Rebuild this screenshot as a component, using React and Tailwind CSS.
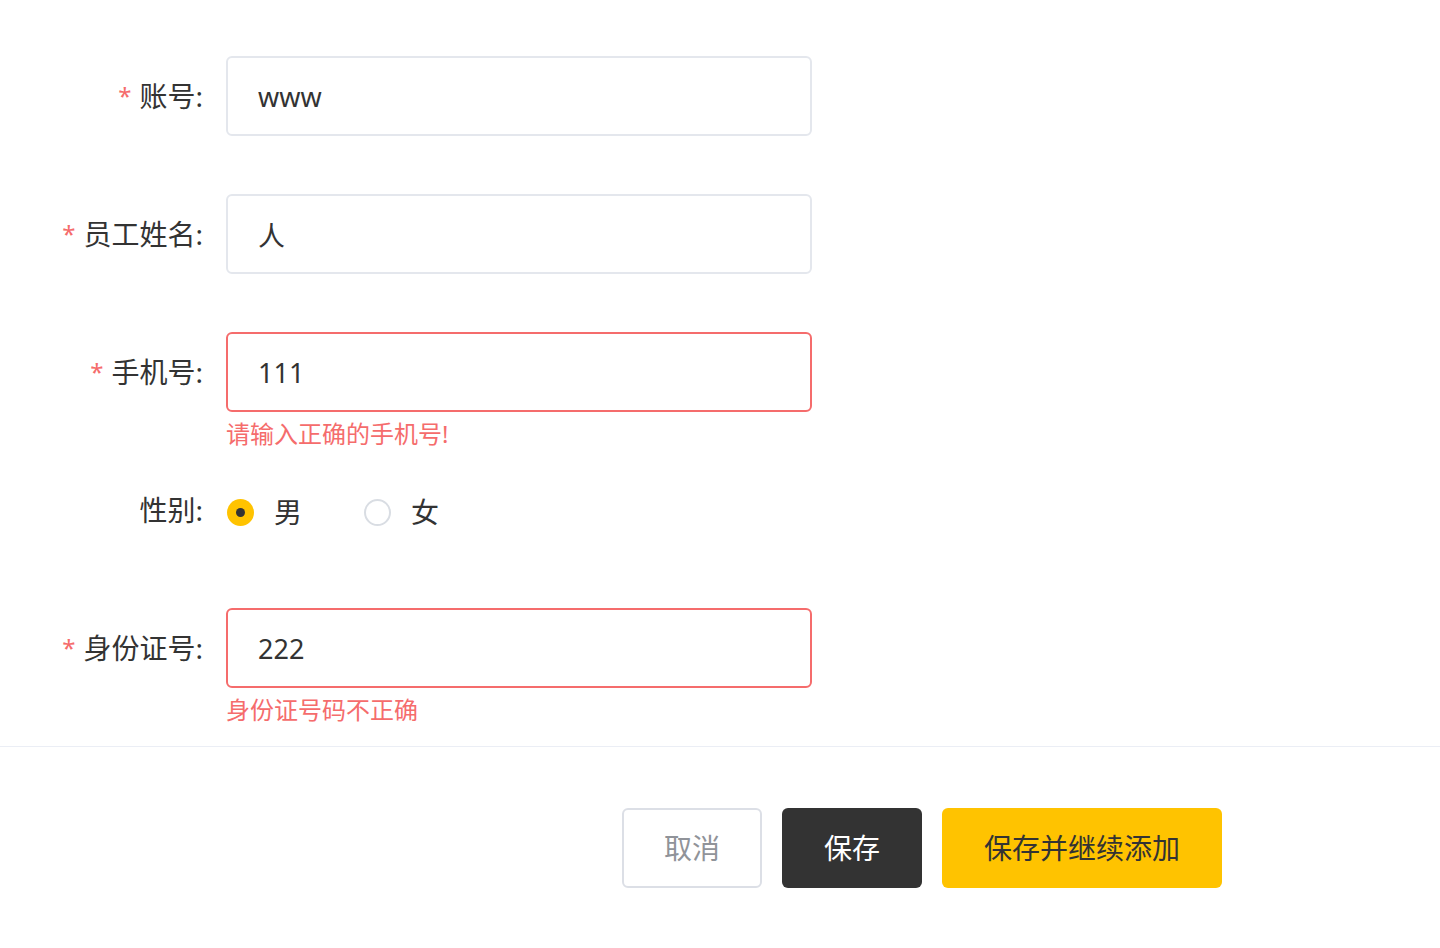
import React, { useState } from "react";

const font = { fontFamily: '"Noto Sans", "Noto Sans CJK SC", sans-serif' };

function FormItem({ label, required, children, error }) {
  return (
    <div className="flex h-[138px] items-start">
      <div className="flex h-20 w-[227px] shrink-0 items-center justify-end pr-[24px] text-[28px] text-[#333]">
        {required && <span className="mr-[8px] text-[24px] text-[#f56c6c]">*</span>}
        <span>{label}:</span>
      </div>
      <div className="-ml-px flex flex-col">
        {children}
        {error && (
          <div className="mt-[10px] text-[24px] leading-6 text-[#f56c6c]">{error}</div>
        )}
      </div>
    </div>
  );
}

function TextInput({ value, invalid }) {
  return (
    <input
      defaultValue={value}
      className={
        "h-20 w-[586px] rounded-[6px] border-2 bg-white px-[30px] text-[27px] text-[#333] outline-none " +
        (invalid ? "border-[#f56c6c]" : "border-[#e4e7ed]")
      }
    />
  );
}

function Radio({ checked, label, onClick }) {
  return (
    <button type="button" onClick={onClick} className="flex items-center gap-[20px]">
      {checked ? (
        <span className="flex h-[27px] w-[27px] items-center justify-center rounded-full bg-[#ffc300]">
          <span className="h-[9px] w-[9px] rounded-full bg-[#333]" />
        </span>
      ) : (
        <span className="h-[27px] w-[27px] rounded-full border-2 border-[#d9dde3] bg-white" />
      )}
      <span className="text-[28px] text-[#333]">{label}</span>
    </button>
  );
}

export default function App() {
  const [gender, setGender] = useState("male");

  return (
    <div className="min-h-[948px] w-full bg-white" style={font}>
      <div className="pt-[56px]">
        <FormItem label="账号" required>
          <TextInput value="www" />
        </FormItem>
        <FormItem label="员工姓名" required>
          <TextInput value="人" />
        </FormItem>
        <FormItem label="手机号" required error="请输入正确的手机号!">
          <TextInput value="111" invalid />
        </FormItem>
        <FormItem label="性别">
          <div className="ml-px flex h-20 items-center gap-[62px] pt-[4px]">
            <Radio checked={gender === "male"} label="男" onClick={() => setGender("male")} />
            <Radio checked={gender === "female"} label="女" onClick={() => setGender("female")} />
          </div>
        </FormItem>
        <FormItem label="身份证号" required error="身份证号码不正确">
          <TextInput value="222" invalid />
        </FormItem>
      </div>

      <div className="h-px w-full bg-[#ebeef5]" />

      <div className="flex justify-end gap-[20px] pr-[218px] pt-[61px]">
        <button className="h-20 w-[140px] rounded-[6px] border-2 border-[#dcdfe6] bg-white text-[28px] text-[#909399]">
          取消
        </button>
        <button className="h-20 w-[140px] rounded-[6px] bg-[#333] text-[28px] text-white">
          保存
        </button>
        <button className="h-20 w-[280px] rounded-[6px] bg-[#ffc300] text-[28px] text-[#333]">
          保存并继续添加
        </button>
      </div>
    </div>
  );
}
